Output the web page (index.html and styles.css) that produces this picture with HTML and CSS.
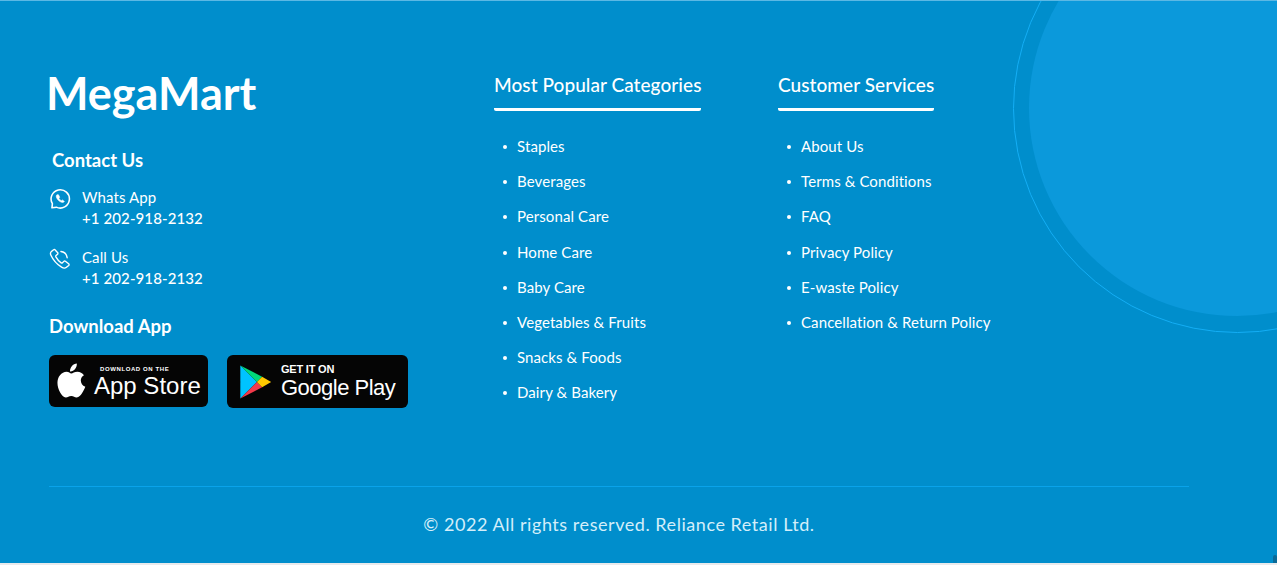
FILE: index.html
```html
<!DOCTYPE html>
<html lang="en">

<head>
    <meta charset="UTF-8">
    <meta name="viewport" content="width=device-width, initial-scale=1.0">
    <title>MegaMart Footer</title>
    <link rel="stylesheet" href="styles.css">
</head>

<body>
    <footer class="footer">
        <div class="ring"></div>
        <div class="disc"></div>

        <div class="footer-top">
            <div class="brand-col">
                <div class="logo">MegaMart</div>

                <h3 class="contact-title">Contact Us</h3>
                <div class="contact-row">
                    <svg class="contact-icon" viewBox="0 0 24 24" fill="none" stroke="#fff" stroke-width="1.7" stroke-linecap="round" stroke-linejoin="round">
                        <path d="M3.2 21.6l.5-4.6A10 10 0 1 1 8 20.9c-1.5.1-3.2.4-4.8.7z" />
                        <path d="M8.7 7.3c-.9.7-1 2-.4 3.400 1 2.300 3 4.100 5.400 4.900 1.300.4 2.500 0 3.100-1l-2.200-1.600-1.200.9c-1.100-.5-2-1.400-2.600-2.600l.9-1.200-1.200-2.500z" fill="#fff" stroke-width=".6" />
                    </svg>
                    <div class="contact-text">
                        <div class="contact-label">Whats App</div>
                        <div class="contact-num">+1 202-918-2132</div>
                    </div>
                </div>
                <div class="contact-row">
                    <svg class="contact-icon" viewBox="0 0 24 24" fill="none" stroke="#fff" stroke-width="1.5" stroke-linecap="round" stroke-linejoin="round">
                        <path d="M5 1.800L2.300 4.200c-.9 1-.9 2.300-.2 3.700 2.300 5 6.800 10 11.600 13 1.900 1.200 3.700 1.500 5 .4l2.800-2.300c.6-.6.500-1.300-.1-1.800l-3.500-2.700c-.6-.4-1.200-.4-1.700.1l-1.500 1.500c-.4.400-.9.400-1.400.1-2.400-1.700-4.400-4-5.800-6.600-.2-.5-.2-.9.200-1.300l1.600-1.500c.5-.5.500-1.100.2-1.700L6.500 2c-.4-.6-1-.7-1.500-.2z" />
                        <path d="M13 3.800c3.600.4 6.300 3.200 6.800 6.800" />
                    </svg>
                    <div class="contact-text">
                        <div class="contact-label">Call Us</div>
                        <div class="contact-num">+1 202-918-2132</div>
                    </div>
                </div>

                <h3 class="download-title">Download App</h3>
                <div class="badges">
                    <div class="badge badge-apple">
                        <svg class="apple-icon" viewBox="0 0 30 36" fill="#fff">
                            <path d="M20.500 0c.2 2.200-.6 4.200-1.800 5.700-1.300 1.600-3.200 2.700-5.200 2.500-.3-2 .7-4.200 1.800-5.500C16.600 1.100 18.800.1 20.500 0z" />
                            <path d="M14.800 10.200c1.300 0 3.400-1.700 6.300-1.700 2.700 0 5.200 1.300 6.800 3.500-4.900 2.800-4.200 9.700 1.400 12-1 2.500-2 4.500-3.300 6.400-1.600 2.400-3.300 4.600-5.600 4.600-2.300.1-3-1.400-5.600-1.400-2.700 0-3.500 1.400-5.600 1.400-2.400.1-4.200-2.400-5.800-4.800C-.2 23.800-.7 16.300 3.100 12c1.700-2.200 4.300-3.500 6.800-3.500 2.300 0 3.600 1.700 4.900 1.700z" />
                        </svg>
                        <div class="badge-text">
                            <div class="apple-small">DOWNLOAD ON THE</div>
                            <div class="apple-big">App Store</div>
                        </div>
                    </div>
                    <div class="badge badge-google">
                        <svg class="play-icon" viewBox="0 0 34 38">
                            <path d="M1 1.500v35L18.500 19z" fill="#00c3ff" />
                            <path d="M1 1.500L18.500 19l5.500-5.600z" fill="#00d97a" />
                            <path d="M1 36.500L18.500 19l5.500 5.600z" fill="#f2394a" />
                            <path d="M24 13.400L18.500 19l5.500 5.600L33.500 19z" fill="#ffc900" />
                        </svg>
                        <div class="badge-text">
                            <div class="google-small">GET IT ON</div>
                            <div class="google-big">Google Play</div>
                        </div>
                    </div>
                </div>
            </div>

            <div class="link-col popular-col">
                <h3 class="col-title">Most Popular Categories</h3>
                <ul class="link-list">
                    <li>Staples</li>
                    <li>Beverages</li>
                    <li>Personal Care</li>
                    <li>Home Care</li>
                    <li>Baby Care</li>
                    <li>Vegetables &amp; Fruits</li>
                    <li>Snacks &amp; Foods</li>
                    <li>Dairy &amp; Bakery</li>
                </ul>
            </div>

            <div class="link-col">
                <h3 class="col-title">Customer Services</h3>
                <ul class="link-list">
                    <li>About Us</li>
                    <li>Terms &amp; Conditions</li>
                    <li>FAQ</li>
                    <li>Privacy Policy</li>
                    <li>E-waste Policy</li>
                    <li>Cancellation &amp; Return Policy</li>
                </ul>
            </div>
        </div>

        <div class="copyright">© 2022 All rights reserved. Reliance Retail Ltd.</div>
        <div class="corner-grip"></div>
    </footer>
</body>

</html>
```

FILE: styles.css
```css
* {
    box-sizing: border-box;
}

html {
    height: 565px;
    background-color: #e8eaec;
}

body {
    margin: 0;
    padding: 0;
    height: 565px;
    overflow: hidden;
    background-color: #e8eaec;
    font-family: Lato, "Open Sans", sans-serif;
    color: #fff;
}

.footer {
    position: relative;
    height: 563px;
    overflow: hidden;
    background-color: #008ecc;
    border-top: 1px solid #5cb8e4;
    padding: 0 88px 0 49px;
}

.ring {
    position: absolute;
    left: 1013px;
    top: -117px;
    width: 449px;
    height: 449px;
    border: 1px solid #14aef5;
    border-radius: 50%;
}

.disc {
    position: absolute;
    left: 1029px;
    top: -101px;
    width: 416px;
    height: 416px;
    background-color: #0b99db;
    border-radius: 50%;
}

.footer-top {
    position: relative;
    display: flex;
    height: 486px;
    border-bottom: 1px solid #0aa3ea;
}

.brand-col {
    width: 445px;
    padding-top: 64px;
}

.logo {
    font-size: 45px;
    line-height: 56px;
    font-weight: 700;
    margin-left: -3px;
}

.contact-title {
    margin: 28px 0 16px 3px;
    font-size: 18.5px;
    line-height: 22px;
    font-weight: 700;
}

.contact-row {
    display: flex;
    margin-bottom: 18px;
}

.contact-icon {
    width: 22px;
    height: 22px;
    margin: 1px 11px 0 0;
}

.contact-text {
    font-size: 15px;
    line-height: 21px;
    letter-spacing: .1px;
}

.contact-num {
    font-weight: 500;
}

.download-title {
    margin: 26px 0 18px 0;
    font-size: 18.5px;
    line-height: 22px;
    font-weight: 700;
}

.badges {
    display: flex;
    gap: 19px;
    align-items: flex-start;
}

.badge {
    display: flex;
    align-items: center;
    background-color: #050505;
    border-radius: 6px;
}

.badge-apple {
    width: 159px;
    height: 52px;
    padding-left: 8px;
}

.badge-google {
    width: 181px;
    height: 53px;
    padding-left: 12px;
}

.apple-icon {
    width: 29px;
    height: 36px;
    margin-right: 8px;
}

.play-icon {
    width: 33px;
    height: 36px;
    margin-right: 9px;
}

.apple-small {
    font-family: "Liberation Sans", sans-serif;
    font-size: 6px;
    line-height: 8px;
    font-weight: 700;
    letter-spacing: .6px;
    margin-left: 6px;
}

.apple-big {
    font-family: "Liberation Sans", sans-serif;
    font-size: 24px;
    line-height: 25px;
}

.google-small {
    font-family: "Liberation Sans", sans-serif;
    font-size: 11px;
    line-height: 12px;
    font-weight: 700;
    letter-spacing: -.2px;
}

.google-big {
    font-family: "Liberation Sans", sans-serif;
    font-size: 22px;
    line-height: 26px;
    letter-spacing: -.5px;
}

.link-col {
    padding-top: 72px;
}

.popular-col {
    width: 284px;
}

.col-title {
    display: inline-block;
    margin: 0;
    padding-bottom: 11px;
    font-size: 19px;
    line-height: 24px;
    font-weight: 500;
    letter-spacing: .06px;
    border-bottom: 3px solid #fff;
    border-radius: 0 0 2px 2px;
}

.link-list {
    list-style: none;
    margin: 18px 0 0;
    padding: 0 0 0 23px;
    font-size: 15px;
    line-height: 35.2px;
    letter-spacing: .1px;
}

.link-list li {
    position: relative;
}

.link-list li::before {
    content: "";
    position: absolute;
    left: -14px;
    top: 16px;
    width: 4px;
    height: 4px;
    background-color: #fff;
    border-radius: 50%;
}

.copyright {
    position: relative;
    margin-top: 25px;
    text-align: center;
    font-size: 18px;
    line-height: 24px;
    letter-spacing: .55px;
    color: #d4eefa;
}

.corner-grip {
    position: absolute;
    right: 0;
    bottom: 0;
    width: 4px;
    height: 8px;
    background-color: #0a6a98;
    border-radius: 2px 2px 0 0;
}
```
